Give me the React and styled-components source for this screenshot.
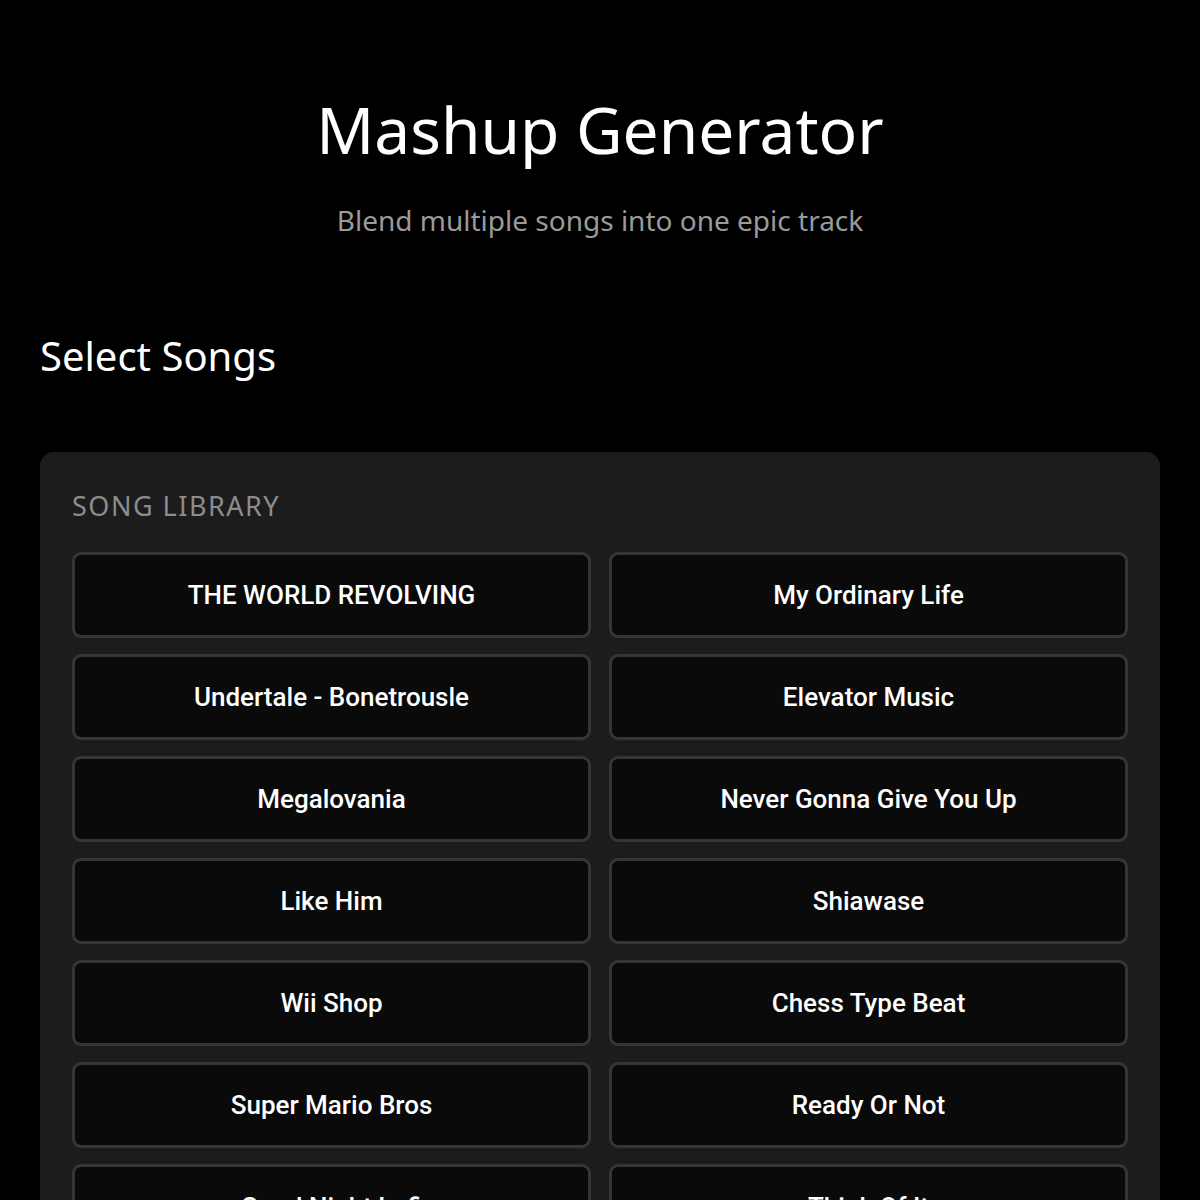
import React from "react";
import styled, { createGlobalStyle } from "styled-components";

const GlobalStyle = createGlobalStyle`
  html, body {
    margin: 0;
    padding: 0;
    background: #000;
    color: #fff;
    font-family: "Noto Sans", sans-serif;
  }
  * {
    box-sizing: border-box;
  }
`;

const Page = styled.div`
  padding: 0 40px 40px;
  min-height: 100vh;
`;

const Header = styled.header`
  display: flex;
  flex-direction: column;
  align-items: center;
  padding-top: 86px;
`;

const Title = styled.h1`
  margin: 0;
  font-size: 64px;
  font-weight: 400;
  line-height: 88px;
`;

const Subtitle = styled.p`
  margin: 26px 0 0;
  font-size: 28px;
  line-height: 40px;
  color: #9a9a9a;
`;

const SectionTitle = styled.h2`
  margin: 88px 0 0;
  font-size: 40px;
  font-weight: 400;
  line-height: 56px;
`;

const Card = styled.section`
  margin-top: 68px;
  background: #1c1c1c;
  border-radius: 14px;
  padding: 32px;
`;

const Label = styled.div`
  font-size: 27px;
  line-height: 40px;
  color: #8c8c8c;
  letter-spacing: 1.5px;
  text-transform: uppercase;
  margin: 2px 0 26px;
`;

const SongGrid = styled.div`
  display: grid;
  grid-template-columns: 1fr 1fr;
  gap: 16px 18px;
`;

const SongButton = styled.button`
  height: 86px;
  background: #0a0a0a;
  border: 3px solid #363636;
  border-radius: 9px;
  color: #fff;
  font-family: Roboto, sans-serif;
  font-weight: 500;
  font-size: 26px;
  cursor: pointer;
  display: flex;
  align-items: center;
  justify-content: center;
`;

const songs = [
  "THE WORLD REVOLVING",
  "My Ordinary Life",
  "Undertale - Bonetrousle",
  "Elevator Music",
  "Megalovania",
  "Never Gonna Give You Up",
  "Like Him",
  "Shiawase",
  "Wii Shop",
  "Chess Type Beat",
  "Super Mario Bros",
  "Ready Or Not",
  "Good Night Lofi",
  "Think Of It",
];

export default function App() {
  return (
    <>
      <GlobalStyle />
      <Page>
        <Header>
          <Title>Mashup Generator</Title>
          <Subtitle>Blend multiple songs into one epic track</Subtitle>
        </Header>
        <SectionTitle>Select Songs</SectionTitle>
        <Card>
          <Label>Song Library</Label>
          <SongGrid>
            {songs.map((s) => (
              <SongButton key={s}>{s}</SongButton>
            ))}
          </SongGrid>
        </Card>
      </Page>
    </>
  );
}
